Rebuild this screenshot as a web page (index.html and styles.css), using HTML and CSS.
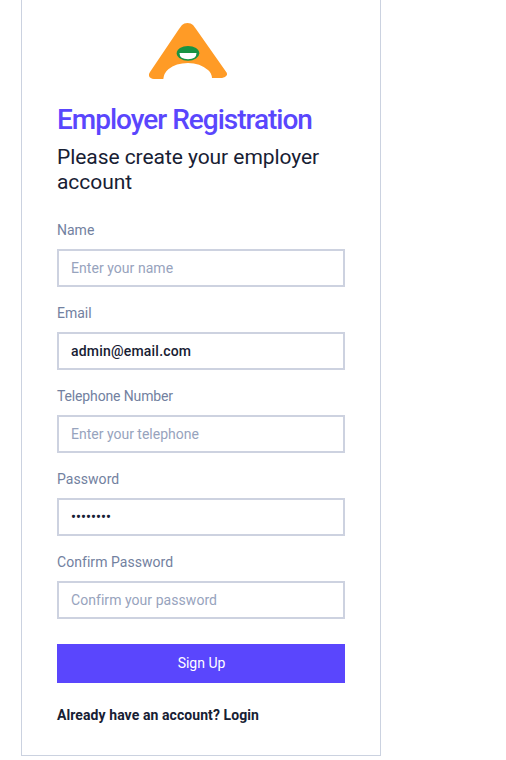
FILE: index.html
```html
<!DOCTYPE html>
<html lang="en">
<head>
<meta charset="utf-8">
<title>Employer Registration</title>
<link rel="stylesheet" href="styles.css">
</head>
<body>
<main class="card">
  <svg class="logo" viewBox="0 0 80 58" aria-hidden="true">
    <path fill="#ff9b26" d="M34 2Q36 0 39.500 0T45 2L48 6L77.500 48Q79.500 50 79 52Q77 55 74 55H64Q63.500 50 60.300 47.300Q52 40 40 40Q28 40 20.300 46.300Q16 50 15.300 56H6Q2 55.500 1 53Q.5 51 2 49L31 6Z"/>
    <ellipse cx="40" cy="30.300" rx="11.300" ry="7.400" fill="#189342"/>
    <path fill="#fff" d="M31.500 30H48.500Q48.500 36.200 40 36.200T31.500 30Z"/>
  </svg>
  <h1 class="title">Employer Registration</h1>
  <p class="subtitle">Please create your employer account</p>
  <form class="form">
    <div class="field"><label for="name">Name</label><input id="name" class="spaced" type="text" placeholder="Enter your name"></div>
    <div class="field"><label for="email">Email</label><input id="email" class="address" type="email" value="admin@email.com"></div>
    <div class="field"><label for="tel" class="tight">Telephone Number</label><input id="tel" type="tel" placeholder="Enter your telephone"></div>
    <div class="field"><label for="password" class="spaced">Password</label><input id="password" class="secret" type="password" value="password"></div>
    <div class="field"><label for="confirm" class="spaced">Confirm Password</label><input id="confirm" class="spaced" type="password" placeholder="Confirm your password"></div>
    <button class="submit" type="button">Sign Up</button>
  </form>
  <p class="login">Already have an account? Login</p>
</main>
</body>
</html>
```
FILE: styles.css
```css
* { box-sizing: border-box; }
body { margin: 0; background: #fff; font-family: Roboto, sans-serif; color: #172033; overflow: hidden; }
.card { width: 360px; height: 756px; margin-left: 21px; padding: 23px 35px 0; border: 1px solid #cbd2e0; border-top: 0; }
.logo { display: block; width: 80px; height: 58px; margin: 0 0 0 91px; }
.title { margin: 21px 0 0; font-size: 28px; line-height: 36px; font-weight: 500; letter-spacing: -1px; color: #5a46fd; white-space: nowrap; }
.subtitle { margin: 7px 0 0; font-size: 21px; line-height: 25px; letter-spacing: -0.06px; }
.form { margin-top: 25px; }
.field { height: 83px; }
.field label { display: block; height: 29px; font-size: 14px; line-height: 20px; color: #7281a0; }
.field input { display: block; width: 288px; height: 38px; padding: 0 12px; border: 2px solid #cdd2e0; border-radius: 0; background: #fff; font: 500 14px/20px Roboto, sans-serif; color: #172033; outline: 0; }
.field input::placeholder { color: #97a3bd; font-weight: 400; opacity: 1; }
.field .spaced { letter-spacing: 0.05px; }
.field .tight { letter-spacing: -0.14px; }
.field .address { letter-spacing: 0.2px; }
.field .secret { letter-spacing: 0.1px; }
.submit { display: block; width: 288px; height: 39px; margin-top: 9px; padding: 0 0 2px 1px; border: 0; background: #5a46fd; color: #fff; font: 400 14px/20px Roboto, sans-serif; }
.login { margin: 22px 0 0; font-size: 14px; line-height: 20px; font-weight: 700; letter-spacing: 0.08px; }
```
